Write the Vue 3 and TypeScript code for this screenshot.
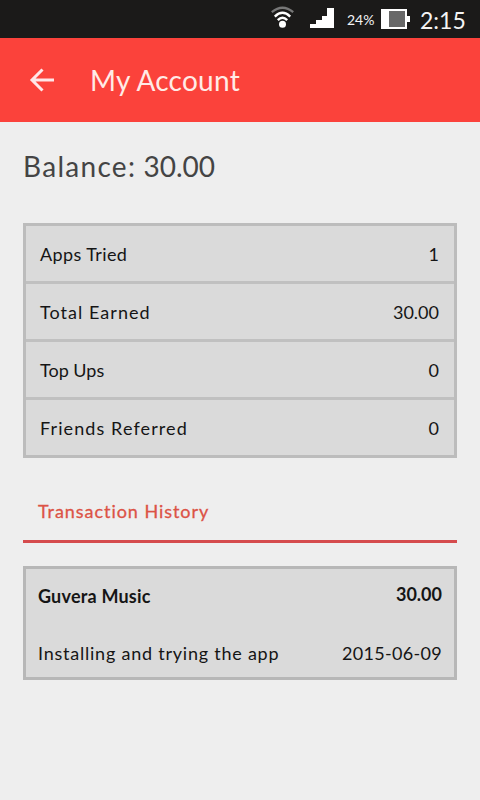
<script setup lang="ts">
interface Stat {
  label: string
  value: string
  kind: string
}

interface Transaction {
  title: string
  amount: string
  description: string
  date: string
}

const stats: Stat[] = [
  { label: 'Apps Tried', value: '1', kind: 'apps' },
  { label: 'Total Earned', value: '30.00', kind: 'earned' },
  { label: 'Top Ups', value: '0', kind: 'topups' },
  { label: 'Friends Referred', value: '0', kind: 'friends' },
]

const transactions: Transaction[] = [
  {
    title: 'Guvera Music',
    amount: '30.00',
    description: 'Installing and trying the app',
    date: '2015-06-09',
  },
]
</script>

<template>
  <div class="screen">
    <header class="status">
      <svg class="wifi" viewBox="0 0 26 24" width="26" height="24">
        <path class="faint" d="M1.8 7.2Q12.5 -1.8 23.2 7.2" />
        <path d="M4.8 11.6Q12.5 4 20.2 11.6" />
        <path d="M7.8 15.2Q12.5 10.4 17.2 15.2" />
        <circle cx="12.5" cy="19.3" r="3.5" />
      </svg>
      <svg class="signal" viewBox="0 0 24 20" width="24" height="20">
        <path d="M0 20V16H6V12H12V8H17V0H24V20Z" />
      </svg>
      <span class="percent">24%</span>
      <svg class="battery" viewBox="0 0 30 20" width="30" height="20">
        <path class="shell" d="M0 0H26V7H29V13H26V20H0Z" />
        <path class="drained" d="M8 2H24V18H8Z" />
      </svg>
      <span class="clock">2:15</span>
    </header>

    <nav class="bar">
      <svg class="back" viewBox="0 0 26 26" width="26" height="26">
        <path d="M25 13H3M13.5 2.5L3 13L13.5 23.5" />
      </svg>
      <h1 class="title">My Account</h1>
    </nav>

    <main class="content">
      <p class="balance"><span class="balance-label">Balance:</span> 30.00</p>

      <div class="stats">
        <div v-for="stat in stats" :key="stat.label" class="stat">
          <span :class="['label', stat.kind]">{{ stat.label }}</span>
          <span class="value">{{ stat.value }}</span>
        </div>
      </div>

      <h2 class="heading"><span>Transaction History</span></h2>

      <article v-for="item in transactions" :key="item.title" class="card">
        <div class="line strong">
          <span class="name">{{ item.title }}</span>
          <span class="amount">{{ item.amount }}</span>
        </div>
        <div class="line">
          <span class="description">{{ item.description }}</span>
          <span class="date">{{ item.date }}</span>
        </div>
      </article>
    </main>
  </div>
</template>

<style>
body {
  background: #eeeeee;
}
</style>

<style scoped>
.screen {
  box-sizing: border-box;
  width: 480px;
  height: 800px;
  overflow: hidden;
  background: #eeeeee;
  color: #151515;
  font-family: Lato, "Open Sans", sans-serif;
  font-variant-ligatures: none;
  white-space: nowrap;
}

.status {
  box-sizing: border-box;
  display: flex;
  align-items: flex-start;
  height: 38px;
  padding-left: 270px;
  background: #1b1a19;
  color: #f4f4f4;
}

.wifi {
  margin-top: 5px;
  fill: none;
  stroke: #ffffff;
  stroke-width: 2.4;
}

.wifi .faint {
  stroke: #777777;
}

.wifi circle {
  fill: #ffffff;
  stroke: none;
}

.signal {
  margin: 8px 0 0 14px;
  fill: #ffffff;
}

.percent {
  width: 34px;
  margin-left: 13px;
  font-size: 14px;
  line-height: 40px;
}

.battery {
  margin-top: 9px;
}

.shell {
  fill: #ffffff;
}

.drained {
  fill: #686868;
}

.clock {
  margin-left: 9px;
  font-size: 23px;
  line-height: 40px;
}

.bar {
  display: flex;
  align-items: center;
  height: 84px;
  background: #fb423b;
}

.back {
  margin: 0 0 0 29px;
  fill: none;
  stroke: #ffe6e8;
  stroke-width: 3;
}

.title {
  margin: 0 0 0 35px;
  color: #ffebe6;
  font-size: 28px;
  font-weight: 400;
  letter-spacing: 0.25px;
  line-height: 86px;
}

.content {
  padding: 24px 23px 0;
}

.balance {
  margin: 0;
  color: #444444;
  font-size: 28px;
  line-height: 40px;
}

.balance-label {
  letter-spacing: 1.3px;
}

.stats {
  box-sizing: border-box;
  height: 235px;
  margin-top: 37px;
  border: 3px solid #bcbcbc;
  background: #dadada;
}

.stat {
  box-sizing: border-box;
  display: flex;
  justify-content: space-between;
  height: 58px;
  padding: 0 15px 0 14px;
  border-bottom: 3px solid #c0c0c0;
  font-size: 18px;
  line-height: 57px;
}

.stat:last-child {
  height: 55px;
  border-bottom: 0;
}

.apps {
  letter-spacing: 0.4px;
}

.earned {
  letter-spacing: 1.05px;
}

.friends {
  letter-spacing: 1.1px;
}

.heading {
  box-sizing: border-box;
  height: 62px;
  margin: 23px 0 0;
  padding-left: 15px;
  border-bottom: 3px solid #d54b4d;
  color: #dc5346;
  font-size: 18px;
  font-weight: 400;
  letter-spacing: 0.95px;
  line-height: 61px;
  -webkit-text-stroke: 0.3px #dc5346;
}

.card {
  box-sizing: border-box;
  height: 114px;
  margin-top: 23px;
  padding: 0 12px;
  border: 3px solid #b7b7b7;
  background: #dadada;
}

.line {
  display: flex;
  justify-content: space-between;
  height: 57px;
  font-size: 18px;
  line-height: 55px;
}

.strong {
  font-weight: 700;
}

.name {
  letter-spacing: 0.2px;
}

.amount {
  line-height: 50px;
}

.description {
  letter-spacing: 0.77px;
}

.date {
  letter-spacing: 0.3px;
}
</style>
